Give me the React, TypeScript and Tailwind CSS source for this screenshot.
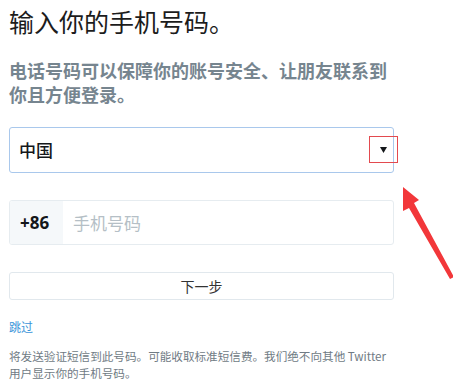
import React from "react";

export default function App() {
  const cjk = { fontFamily: '"Noto Sans CJK SC", "Noto Sans", sans-serif' };
  return (
    <div className="relative w-[453px] h-[390px] bg-white overflow-hidden" style={cjk}>
      <div className="pl-[9px] pt-[6px] w-[394px]">
        <h1 className="text-[25px] leading-[30px] text-[#1c1c1c] font-normal">输入你的手机号码。</h1>
        <p className="mt-[22px] text-[18px] leading-[24px] font-bold text-[#76858f]">
          电话号码可以保障你的账号安全、让朋友联系到
          <br />
          你且方便登录。
        </p>

        <div className="relative mt-[21px] h-[46px] w-[385px] border border-[#a9c8ec] rounded-[3px] flex items-center pl-[9px] pr-[6px] justify-between">
          <span className="text-[17px] font-medium text-[#14171a]">中国</span>
          <svg width="7" height="6" viewBox="0 0 7 6">
            <polygon points="0,0 7,0 3.5,6" fill="#14171a" />
          </svg>
          <div className="absolute right-[-5px] top-[8px] w-[29px] h-[27px] border border-solid border-[#e34a4f]" />
        </div>

        <div className="mt-[27px] h-[45px] w-[385px] border border-[#e6ecf0] rounded-[3px] flex items-stretch overflow-hidden">
          <div className="w-[53px] bg-[#f5f8fa] flex items-center pl-[10px] text-[17px] font-bold text-[#14171a]" style={{ fontFamily: '"Open Sans", "Noto Sans", sans-serif' }}>
            +86
          </div>
          <div className="flex items-center pl-[10px] text-[17px] text-[#b5bfc6]">手机号码</div>
        </div>

        <div className="mt-[27px] h-[28px] w-[385px] border border-[#e1e8ed] rounded-[3px] flex items-center justify-center text-[14px] text-[#333]">
          下一步
        </div>

        <div className="mt-[19px] text-[12px] leading-[16px] text-[#3b94d9]">跳过</div>

        <p className="mt-[13px] text-[11.6px] leading-[17px] text-[#707b84]">
          将发送验证短信到此号码。可能收取标准短信费。我们绝不向其他 Twitter
          <br />
          用户显示你的手机号码。
        </p>
      </div>

      <svg className="absolute left-0 top-0" width="453" height="390" viewBox="0 0 453 390">
        <polygon points="403,187 419,200 414,203 454,277 450,279 409,208 403,211" fill="#f2373a" />
      </svg>
    </div>
  );
}
